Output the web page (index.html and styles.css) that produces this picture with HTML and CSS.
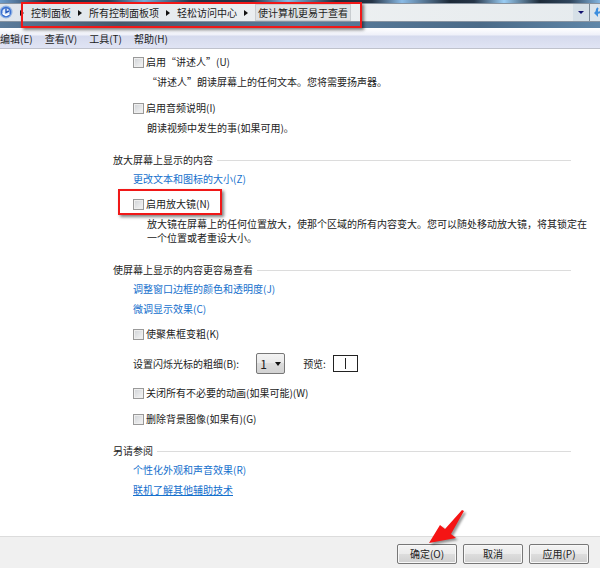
FILE: index.html
```html
<!DOCTYPE html>
<html lang="zh-CN">
<head>
    <meta charset="UTF-8">
    <meta name="viewport" content="width=device-width, initial-scale=1.0">
    <title>使计算机更易于查看</title>
    <link rel="stylesheet" href="styles.css">
</head>
<body>

    <header class="title-bar">
        <div class="address-bar">
            <svg class="app-icon" width="13" height="17" viewBox="0 0 13 17">
                <circle cx="6" cy="8" r="6.5" fill="#8fb2e4"/>
                <circle cx="6" cy="8" r="5.2" fill="#3a70d0"/>
                <circle cx="6" cy="8" r="3.6" fill="#dfeafa"/>
                <path d="M6 4.5V8.5L9 7" fill="none" stroke="#2458bb" stroke-width="1.4"/>
                <path d="M2.5 9.5L6 11.5L9.5 10" fill="none" stroke="#fff" stroke-width="1.2"/>
            </svg>
            <nav class="breadcrumb">
                <span class="crumb-arrow"></span>
                <a href="#">控制面板</a>
                <span class="crumb-arrow"></span>
                <a href="#">所有控制面板项</a>
                <span class="crumb-arrow"></span>
                <a href="#">轻松访问中心</a>
                <span class="crumb-arrow"></span>
                <a href="#" class="current">使计算机更易于查看</a>
            </nav>
            <button class="history" aria-label="历史记录"></button>
            <button class="refresh" aria-label="刷新">
                <svg width="9" height="12" viewBox="0 0 9 12">
                    <path d="M6 1Q4 3 5 6L9 5" fill="none" stroke="#3c8ede" stroke-width="2"/>
                    <path d="M2 6L6 2V10Z" fill="#3c8ede"/>
                </svg>
            </button>
        </div>
        <div class="mark mark-path"></div>
    </header>

    <nav class="menu">
        <button>编辑(E)</button>
        <button>查看(V)</button>
        <button>工具(T)</button>
        <button>帮助(H)</button>
    </nav>

    <main class="content">
        <section>
            <div class="option">
                <label class="check"><input type="checkbox">启用“讲述人”(U)</label>
                <p>“讲述人”朗读屏幕上的任何文本。您将需要扬声器。</p>
            </div>
            <div class="option">
                <label class="check"><input type="checkbox">启用音频说明(I)</label>
                <p>朗读视频中发生的事(如果可用)。</p>
            </div>
        </section>

        <section>
            <h2>放大屏幕上显示的内容</h2>
            <ul class="links">
                <li><a href="#">更改文本和图标的大小(Z)</a></li>
            </ul>
            <div class="option">
                <label class="check"><input type="checkbox">启用放大镜(N)<span class="mark mark-option"></span></label>
                <p>放大镜在屏幕上的任何位置放大，使那个区域的所有内容变大。您可以随处移动放大镜，将其锁定在一个位置或者重设大小。</p>
            </div>
        </section>

        <section>
            <h2>使屏幕上显示的内容更容易查看</h2>
            <ul class="links">
                <li><a href="#">调整窗口边框的颜色和透明度(J)</a></li>
                <li><a href="#">微调显示效果(C)</a></li>
            </ul>
            <div class="option">
                <label class="check"><input type="checkbox">使聚焦框变粗(K)</label>
            </div>
            <div class="option caret-row">
                <label for="caret">设置闪烁光标的粗细(B):</label>
                <div class="select">
                    <select id="caret">
                        <option>1</option>
                        <option>2</option>
                        <option>3</option>
                    </select>
                </div>
                <span>预览:</span>
                <div class="preview"></div>
            </div>
            <div class="option">
                <label class="check"><input type="checkbox">关闭所有不必要的动画(如果可能)(W)</label>
            </div>
            <div class="option">
                <label class="check"><input type="checkbox">删除背景图像(如果有)(G)</label>
            </div>
        </section>

        <section>
            <h2>另请参阅</h2>
            <ul class="links">
                <li><a href="#">个性化外观和声音效果(R)</a></li>
                <li><a href="#" class="active">联机了解其他辅助技术</a></li>
            </ul>
        </section>
    </main>

    <footer class="actions">
        <div class="ok">
            <button>确定(O)</button>
            <svg class="pointer" width="42" height="42" viewBox="0 0 42 42">
                <path d="M3 36L14 18L19 22L36 3L38 4L25 27L30 31Z" fill="#f51414"/>
            </svg>
        </div>
        <button>取消</button>
        <button>应用(P)</button>
    </footer>

</body>
</html>
```
FILE: styles.css
```css
* {
    box-sizing: border-box;
}

body {
    margin: 0;
    min-height: 100vh;
    display: flex;
    flex-direction: column;
    background-color: #fff;
    color: #222;
    font-family: "Noto Sans CJK SC", "Open Sans", sans-serif;
    font-size: 10px;
    line-height: 14px;
}

button, select, input {
    margin: 0;
    padding: 0;
    color: inherit;
    font: inherit;
}

h2, p, ul {
    margin: 0;
    padding: 0;
    font-size: 10px;
    font-weight: normal;
}

a {
    color: #1570cd;
    text-decoration: none;
}

/* address bar */
.title-bar {
    position: relative;
    padding: 3px 0 6px;
    background:
        linear-gradient(90deg, #6d9ccb, #1d2b3c 8%, #263a50 18%, #79aedb 24%, #213247 32%, #253345 42%, #88bde9 48%, #1d2a38 56%, #263547 62%, #8abbe6 67%, #1d2a38 75%, #263547 79%, #9acdf4 84%, #1d2b39 90%, #2f455c 95%, #82b4df) top / 100% 3px no-repeat,
        linear-gradient(90deg, #5b7c9c, #45586b 20%, #5a7d9d 50%, #4b6b88 80%, #5f86a8);
}

.address-bar {
    display: flex;
    align-items: stretch;
    height: 19px;
    border-top: 1px solid #8793a0;
    border-bottom: 1px solid #8793a0;
    background: linear-gradient(90deg, #dfe5ec, #edf0f1 50%, #e6ebee);
}

.app-icon {
    flex: none;
}

.breadcrumb {
    flex: 1;
    display: flex;
    align-items: center;
    gap: 7px;
    padding-left: 7px;
    white-space: nowrap;
}

.breadcrumb a {
    color: #222;
}

.breadcrumb .current {
    padding: 0 2px;
    border: 1px solid #c9cdd0;
    background-color: #dfe2e4;
    line-height: 15px;
}

.crumb-arrow {
    border-left: 4px solid #111;
    border-top: 3px solid transparent;
    border-bottom: 3px solid transparent;
}

.history {
    display: flex;
    align-items: center;
    justify-content: center;
    width: 16px;
    border: none;
    background-color: #d6e0e7;
}

.history::after {
    content: "";
    border-top: 3px solid #10106e;
    border-left: 3px solid transparent;
    border-right: 3px solid transparent;
}

.refresh {
    display: flex;
    align-items: center;
    width: 11px;
    padding-left: 2px;
    overflow: hidden;
    border: none;
    border-left: 1px solid #7d8b98;
    background-color: #dce5ec;
}

.refresh svg {
    flex: none;
}

/* menu */
.menu {
    display: flex;
    gap: 12px;
    height: 21px;
    padding-top: 1px;
    border-bottom: 1px solid #bfc2cc;
    background: linear-gradient(#fff, #eef0f9 7px, #d5daed 8px, #e0e4f4);
}

.menu button {
    border: none;
    background: none;
}

/* settings */
.content {
    flex: 1;
    padding: 6px 12px 24px 113px;
}

section + section {
    margin-top: 18px;
}

h2 {
    display: flex;
    align-items: center;
    gap: 4px;
    margin-right: 17px;
}

h2::after {
    content: "";
    flex: 1;
    height: 1px;
    background-color: #dcdcdc;
}

.links {
    display: flex;
    flex-direction: column;
    gap: 6px;
    padding: 5px 0 0 20px;
    margin-bottom: 11px;
    list-style: none;
}

.links .active {
    text-decoration: underline;
}

.option {
    padding-left: 20px;
}

.option + .option {
    margin-top: 12px;
}

.option p {
    padding: 6px 0 0 14px;
}

.check {
    position: relative;
    display: flex;
    align-items: center;
    gap: 2px;
    width: fit-content;
}

.check input {
    appearance: none;
    width: 11px;
    height: 11px;
    border: 1px solid #999;
    background: linear-gradient(135deg, #cfd2d6, #f6f6f6);
    box-shadow: inset 0 0 0 1px #eee;
}

.caret-row {
    display: flex;
    align-items: center;
}

.select {
    position: relative;
    margin: 0 18px 0 17px;
}

.select select {
    display: block;
    appearance: none;
    width: 29px;
    height: 21px;
    padding-left: 3px;
    border: 1px solid #777;
    border-radius: 2px;
    background: linear-gradient(#f3f3f3, #e9e9e9 50%, #dcdcdc 50%, #d2d2d2);
    font-size: 12px;
}

.select::after {
    content: "";
    position: absolute;
    top: 9px;
    right: 4px;
    border-top: 4px solid #111;
    border-left: 3px solid transparent;
    border-right: 3px solid transparent;
    pointer-events: none;
}

.preview {
    width: 25px;
    height: 17px;
    margin-left: 7px;
    padding: 2px 11px;
    border: 1px solid #222;
}

.preview::after {
    content: "";
    display: block;
    width: 1px;
    height: 11px;
    background-color: #222;
}

/* bottom buttons */
.actions {
    display: flex;
    justify-content: flex-end;
    gap: 6px;
    padding: 7px 11px 4px;
    border-top: 1px solid #dcdcdc;
    background-color: #f0f0f0;
}

.actions button {
    width: 60px;
    height: 20px;
    border: 1px solid #777;
    border-radius: 2px;
    background: linear-gradient(#f3f3f3, #ebebeb 50%, #dddddd 50%, #d0d0d0);
    box-shadow: inset 0 0 0 1px #f8f8f8;
}

.ok {
    position: relative;
}

/* red marks */
.mark {
    position: absolute;
    border: 2px solid #f01818;
    box-shadow: 2px 2px 3px rgba(0, 0, 0, 0.5);
    pointer-events: none;
}

.mark-path {
    top: 2px;
    left: 21px;
    width: 341px;
    height: 26px;
}

.mark-option {
    top: -8px;
    left: -15px;
    width: 104px;
    height: 26px;
}

.pointer {
    position: absolute;
    top: -37px;
    left: 29px;
    filter: drop-shadow(2px 2px 1px rgba(0, 0, 0, 0.4));
    pointer-events: none;
}
```
